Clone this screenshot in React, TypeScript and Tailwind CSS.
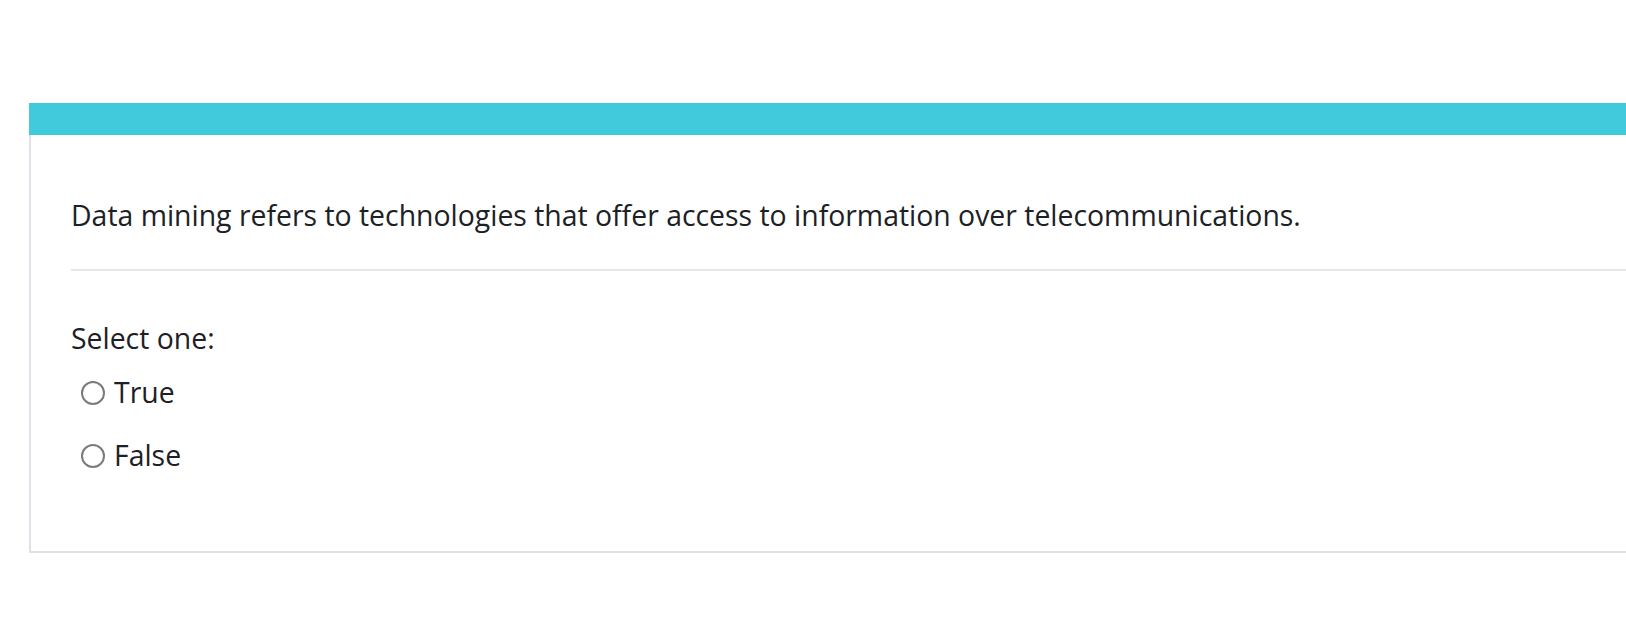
import React from "react";

function Radio({ label }: { label: string }) {
  return (
    <label className="flex items-center h-[42px]">
      <span className="ml-[10px] mt-[2px] w-[24px] h-[24px] rounded-full border-2 border-[#7b7b7b] bg-white shrink-0" />
      <span className="ml-[9px]">{label}</span>
    </label>
  );
}

export default function App() {
  return (
    <div
      className="w-full h-[628px] overflow-hidden bg-white text-[#1d2125]"
      style={{ fontFamily: '"Open Sans", "Noto Sans", sans-serif' }}
    >
      <div className="pt-[103px] pl-[29px]">
        <div className="w-[1700px]">
          <div className="h-[32px] bg-[#41cadb]" />
          <div className="border-l-2 border-b-2 border-[#dee2e6] pl-[40px] pt-[59px] pb-[75px] text-[28.4px] leading-[42px]">
            <p>Data mining refers to technologies that offer access to information over telecommunications.</p>
            <div className="mt-[33px] h-[2px] bg-[#e4e7eb]" />
            <div className="mt-[46px]">Select one:</div>
            <div className="mt-[12px]">
              <Radio label="True" />
            </div>
            <div className="mt-[21px]">
              <Radio label="False" />
            </div>
          </div>
        </div>
      </div>
    </div>
  );
}
